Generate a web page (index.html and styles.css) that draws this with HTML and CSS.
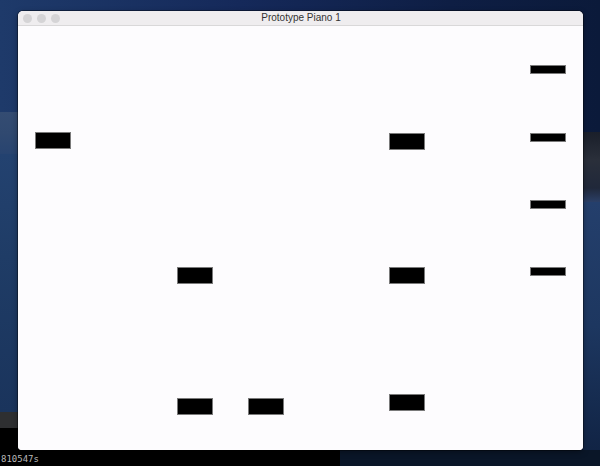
FILE: index.html
```html
<!DOCTYPE html>
<html>
<head>
<meta charset="utf-8">
<title>Prototype Piano 1</title>
<link rel="stylesheet" href="styles.css">
</head>
<body>
<div class="desktop">
  <div class="window">
    <div class="titlebar">
      <div class="lights">
        <span class="light"></span>
        <span class="light"></span>
        <span class="light"></span>
      </div>
      <div class="title">Prototype Piano 1</div>
    </div>
    <div class="canvas">
      <div class="note" style="left:17px;top:106px"></div>
      <div class="note" style="left:371px;top:107px"></div>
      <div class="note" style="left:159px;top:241px"></div>
      <div class="note" style="left:371px;top:241px"></div>
      <div class="note" style="left:159px;top:372px"></div>
      <div class="note" style="left:230px;top:372px"></div>
      <div class="note" style="left:371px;top:368px"></div>
      <div class="note thin" style="left:512px;top:39px"></div>
      <div class="note thin" style="left:512px;top:107px"></div>
      <div class="note thin" style="left:512px;top:174px"></div>
      <div class="note thin" style="left:512px;top:241px"></div>
    </div>
  </div>
  <div class="terminal">810547s</div>
</div>
</body>
</html>
```
FILE: styles.css
```css
html, body {
  margin: 0;
  padding: 0;
  width: 600px;
  height: 466px;
  overflow: hidden;
}

.desktop {
  position: relative;
  width: 600px;
  height: 466px;
  background:
    /* bottom black terminal area */
    linear-gradient(#000, #000) 0 428px / 340px 38px no-repeat,
    /* grey band on left */
    linear-gradient(#2e2f31, #2e2f31) 0 412px / 18px 16px no-repeat,
    /* bottom navy strip on right */
    linear-gradient(#0a1628, #0a1628) 340px 450px / 260px 16px no-repeat,
    /* right mountain */
    linear-gradient(180deg, #1a1f2a 0%, #2a2f3a 40%, #20283a 80%, #2b3f66 100%) 583px 132px / 17px 70px no-repeat,
    /* right sea */
    linear-gradient(180deg, #243f6c 0%, #1d3760 50%, #112445 100%) 583px 202px / 17px 248px no-repeat,
    /* left mountain */
    linear-gradient(180deg, #344c72 0%, #304970 50%, #284470 100%) 0 112px / 18px 42px no-repeat,
    /* left sea */
    linear-gradient(180deg, #234270 0%, #1f3c66 40%, #1a345c 100%) 0 154px / 18px 258px no-repeat,
    /* top sky: horizontal */
    linear-gradient(90deg, #1e3a6a 0%, #15295a 40%, #0e1e44 75%, #0b1a3a 100%) 0 0 / 600px 132px no-repeat,
    /* left sky lower haze */
    linear-gradient(180deg, #1e3a6a 0%, #2a4876 100%) 0 0 / 18px 154px no-repeat,
    #0b1a3a;
  font-family: "Liberation Sans", Arial, sans-serif;
}

.window {
  position: absolute;
  left: 18px;
  top: 11px;
  width: 565px;
  height: 439px;
  border-radius: 5px 5px 4px 4px;
  overflow: hidden;
  background: #fdfcfe;
  box-shadow: 0 0 0 1px rgba(0, 0, 0, 0.35), 0 2px 6px rgba(0, 0, 0, 0.35);
  display: flex;
  flex-direction: column;
}

.titlebar {
  position: relative;
  height: 14px;
  flex: 0 0 14px;
  background: #efedef;
  border-bottom: 1px solid #d9d8d9;
  display: flex;
  align-items: center;
  justify-content: center;
}

.lights {
  position: absolute;
  left: 5px;
  top: 3px;
  display: flex;
  gap: 5px;
}

.light {
  width: 9px;
  height: 9px;
  border-radius: 50%;
  background: #d5d4d6;
}

.title {
  font-family: "Liberation Sans", Arial, sans-serif;
  font-size: 10px;
  color: #333;
  line-height: 14px;
  padding-left: 1px;
}

.canvas {
  position: relative;
  flex: 1 1 auto;
  background: #fdfcfe;
}

.note {
  position: absolute;
  width: 36px;
  height: 17px;
  box-sizing: border-box;
  background: #000;
  border: 1px solid #7a7a7a;
}

.note.thin {
  height: 9px;
}

.terminal {
  position: absolute;
  left: 1px;
  bottom: 1px;
  font-family: "DejaVu Sans Mono", "Liberation Mono", monospace;
  font-size: 9px;
  line-height: 11px;
  color: #b8b8b8;
}
```
